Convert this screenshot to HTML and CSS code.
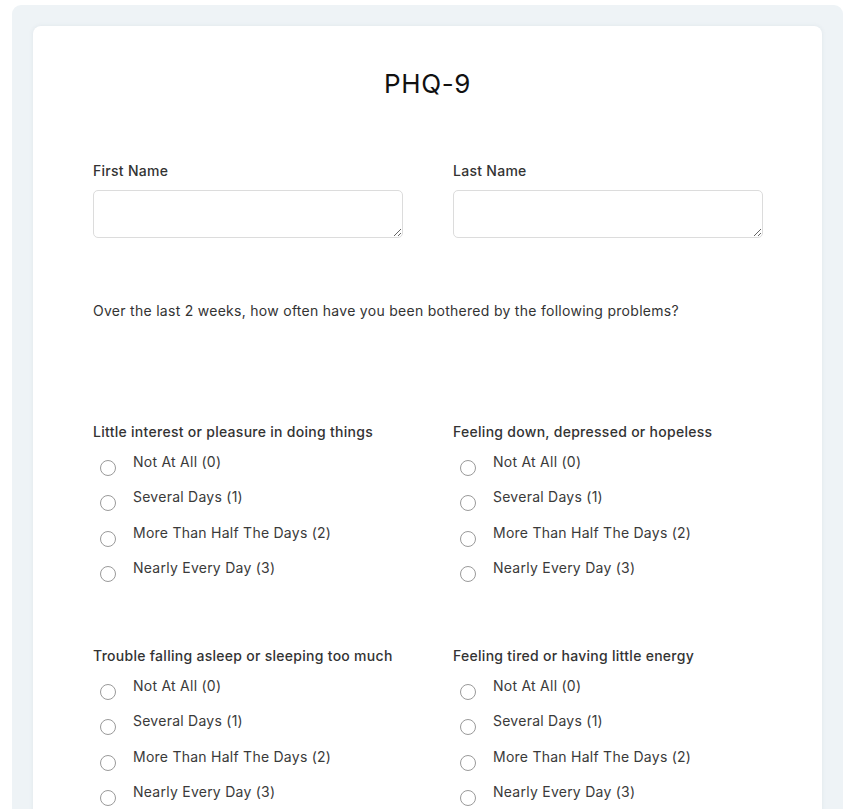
FILE: index.html
```html
<!DOCTYPE html>
<html lang="en">
<head>
    <meta charset="UTF-8">
    <meta name="viewport" content="width=device-width, initial-scale=1.0">
    <title>PHQ-9</title>
    <link rel="stylesheet" href="styles.css">
</head>
<body>
    <div class="page">
        <form class="card">
            <h1 class="title">PHQ-9</h1>

            <div class="names">
                <div class="field">
                    <label for="firstName">First Name</label>
                    <textarea id="firstName"></textarea>
                </div>
                <div class="field">
                    <label for="lastName">Last Name</label>
                    <textarea id="lastName"></textarea>
                </div>
            </div>

            <p class="intro">Over the last 2 weeks, how often have you been bothered by the following problems?</p>

            <div class="questions">
                <div class="question">
                    <div class="question-title">Little interest or pleasure in doing things</div>
                    <label class="option"><input type="radio" name="q1" value="0"><span>Not At All (0)</span></label>
                    <label class="option"><input type="radio" name="q1" value="1"><span>Several Days (1)</span></label>
                    <label class="option"><input type="radio" name="q1" value="2"><span>More Than Half The Days (2)</span></label>
                    <label class="option"><input type="radio" name="q1" value="3"><span>Nearly Every Day (3)</span></label>
                </div>
                <div class="question">
                    <div class="question-title">Feeling down, depressed or hopeless</div>
                    <label class="option"><input type="radio" name="q2" value="0"><span>Not At All (0)</span></label>
                    <label class="option"><input type="radio" name="q2" value="1"><span>Several Days (1)</span></label>
                    <label class="option"><input type="radio" name="q2" value="2"><span>More Than Half The Days (2)</span></label>
                    <label class="option"><input type="radio" name="q2" value="3"><span>Nearly Every Day (3)</span></label>
                </div>
                <div class="question">
                    <div class="question-title">Trouble falling asleep or sleeping too much</div>
                    <label class="option"><input type="radio" name="q3" value="0"><span>Not At All (0)</span></label>
                    <label class="option"><input type="radio" name="q3" value="1"><span>Several Days (1)</span></label>
                    <label class="option"><input type="radio" name="q3" value="2"><span>More Than Half The Days (2)</span></label>
                    <label class="option"><input type="radio" name="q3" value="3"><span>Nearly Every Day (3)</span></label>
                </div>
                <div class="question">
                    <div class="question-title">Feeling tired or having little energy</div>
                    <label class="option"><input type="radio" name="q4" value="0"><span>Not At All (0)</span></label>
                    <label class="option"><input type="radio" name="q4" value="1"><span>Several Days (1)</span></label>
                    <label class="option"><input type="radio" name="q4" value="2"><span>More Than Half The Days (2)</span></label>
                    <label class="option"><input type="radio" name="q4" value="3"><span>Nearly Every Day (3)</span></label>
                </div>
                <div class="question">
                    <div class="question-title">Poor appetite or overeating</div>
                    <label class="option"><input type="radio" name="q5" value="0"><span>Not At All (0)</span></label>
                    <label class="option"><input type="radio" name="q5" value="1"><span>Several Days (1)</span></label>
                    <label class="option"><input type="radio" name="q5" value="2"><span>More Than Half The Days (2)</span></label>
                    <label class="option"><input type="radio" name="q5" value="3"><span>Nearly Every Day (3)</span></label>
                </div>
                <div class="question">
                    <div class="question-title">Feeling bad about yourself</div>
                    <label class="option"><input type="radio" name="q6" value="0"><span>Not At All (0)</span></label>
                    <label class="option"><input type="radio" name="q6" value="1"><span>Several Days (1)</span></label>
                    <label class="option"><input type="radio" name="q6" value="2"><span>More Than Half The Days (2)</span></label>
                    <label class="option"><input type="radio" name="q6" value="3"><span>Nearly Every Day (3)</span></label>
                </div>
            </div>
        </form>
    </div>
</body>
</html>
```

FILE: styles.css
```css
body {
    font-family: Inter, "Noto Sans", sans-serif;
    margin: 5px 12px 0;
    padding: 0;
    background-color: white;
    color: #333;
    letter-spacing: 0.28px;
}
.page {
    background-color: #eef3f6;
    border-radius: 9px;
    padding: 21px 21px 40px;
}
.card {
    background-color: white;
    border-radius: 8px;
    padding: 42px 60px 60px;
    box-shadow: 0 0 4px rgba(120, 140, 160, 0.12);
}
.title {
    font-size: 26px;
    font-weight: 400;
    line-height: 32px;
    letter-spacing: 0.6px;
    color: #111;
    text-align: center;
    margin: 0 0 61px;
}
.names {
    display: grid;
    grid-template-columns: 310px 310px;
    column-gap: 50px;
}
.field label {
    display: block;
    font-size: 14px;
    font-weight: 500;
    line-height: 20px;
    margin-bottom: 9px;
}
.field textarea {
    display: block;
    width: 100%;
    height: 48px;
    box-sizing: border-box;
    border: 1px solid #dcdcdc;
    border-radius: 5px;
    font-family: inherit;
    font-size: 14px;
    padding: 8px 10px;
    margin: 0;
}
.intro {
    font-size: 14px;
    line-height: 20px;
    margin: 63px 0 101px;
}
.questions {
    display: grid;
    grid-template-columns: 310px 310px;
    column-gap: 50px;
    row-gap: 64px;
}
.question {
    display: flex;
    flex-direction: column;
    gap: 11.4px;
}
.question-title {
    font-size: 14px;
    font-weight: 500;
    line-height: 20px;
    margin-bottom: -1.6px;
    white-space: nowrap;
}
.option {
    display: flex;
    align-items: flex-start;
    font-size: 14px;
    line-height: 20px;
    letter-spacing: 0.25px;
    color: #3a3a3a;
}
.option input {
    appearance: none;
    width: 16px;
    height: 16px;
    margin: 8px 17px 0 7px;
    border: 1.5px solid #9a9a9a;
    border-radius: 50%;
    box-sizing: border-box;
    flex-shrink: 0;
}
.option input:checked {
    border: 5px solid #1961b6;
}
```
